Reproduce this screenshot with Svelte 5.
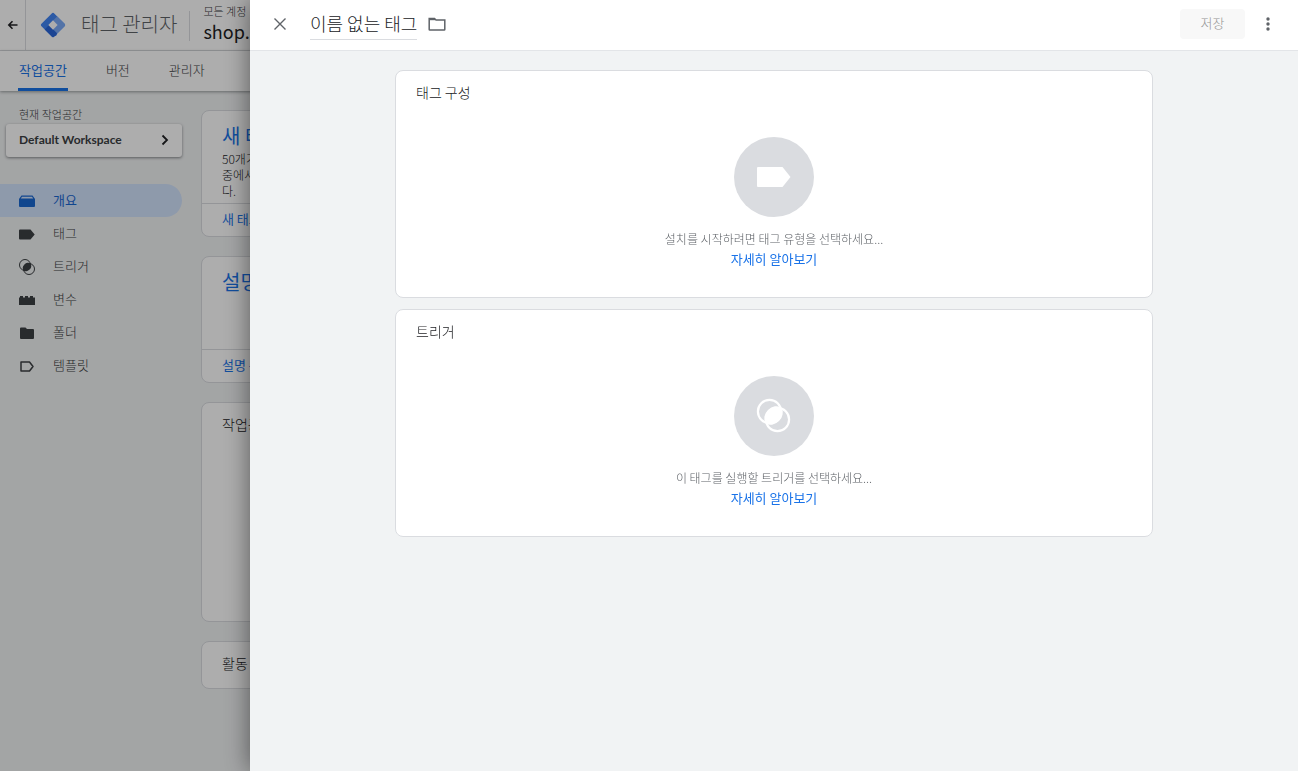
<script>
  let tagName = '이름 없는 태그';
  let activeTab = '작업공간';
  let activeItem = 'overview';

  const tabs = ['작업공간', '버전', '관리자'];

  const navItems = [
    { id: 'overview', label: '개요' },
    { id: 'tags', label: '태그' },
    { id: 'triggers', label: '트리거' },
    { id: 'variables', label: '변수' },
    { id: 'folders', label: '폴더' },
    { id: 'templates', label: '템플릿' }
  ];

  const sections = [
    { id: 'tag', title: '태그 구성', hint: '설치를 시작하려면 태그 유형을 선택하세요...' },
    { id: 'trigger', title: '트리거', hint: '이 태그를 실행할 트리거를 선택하세요...' }
  ];
</script>

<div class="page">
  <header class="topbar">
    <button class="back" aria-label="뒤로">
      <svg width="12" height="12" viewBox="0 0 12 12" fill="none" stroke="#202124" stroke-width="1.6">
        <path d="M10.500 6H2M5.500 2.300 1.800 6l3.700 3.700" />
      </svg>
    </button>
    <svg class="logo" width="26" height="26" viewBox="0 0 26 26">
      <path d="M11.500 1.700a2 2 0 0 1 3 0L24.300 11.500a2 2 0 0 1 0 3L14.500 24.300a2 2 0 0 1-3 0L1.700 14.500a2 2 0 0 1 0-3z" fill="#4285f4" />
      <path d="M17.200 4.400 24.300 11.500a2 2 0 0 1 0 3L17 21.800 13 17.500 17.500 13 13 8.500z" fill="#7baaf7" />
      <path d="M4.700 17.500 8.800 13.300 16.800 21a2.700 2.700 0 0 1-2.300 3.300 2 2 0 0 1-3 0z" fill="#2a66d9" />
      <path d="M13 8.300 17.700 13 13 17.700 8.300 13z" fill="#fff" />
    </svg>
    <span class="product">태그 관리자</span>
    <div class="account">
      <span class="account-path">모든 계정</span>
      <span class="account-name">shop.</span>
    </div>
  </header>

  <nav class="tabs">
    {#each tabs as tab}
      <button class="tab" class:active={activeTab === tab} on:click={() => (activeTab = tab)}>{tab}</button>
    {/each}
  </nav>

  <div class="body">
    <aside>
      <p class="caption">현재 작업공간</p>
      <button class="workspace">
        Default Workspace
        <svg width="8" height="12" viewBox="0 0 8 12" fill="none" stroke="#202124" stroke-width="1.8">
          <path d="M1.500 1.500 6 6l-4.500 4.500" />
        </svg>
      </button>
      <ul>
        {#each navItems as item}
          <li>
            <button class="nav-item" class:active={activeItem === item.id} on:click={() => (activeItem = item.id)}>
              <svg width="16" height="16" viewBox="0 0 16 16" fill="currentColor">
                {#if item.id === 'overview'}
                  <path d="M2.500 2.500h11L16 6v7a1 1 0 0 1-1 1H1a1 1 0 0 1-1-1V6zM3 3.700 1.800 5.500h12.400L13 3.700z" fill-rule="evenodd" />
                {:else if item.id === 'tags'}
                  <path d="M1 3.500h10.500L15.700 8.500l-4.200 5H1a1 1 0 0 1-1-1v-8a1 1 0 0 1 1-1z" />
                {:else if item.id === 'triggers'}
                  <circle cx="6" cy="6" r="5.500" fill="none" stroke="currentColor" />
                  <circle cx="10" cy="10" r="5.500" fill="none" stroke="currentColor" />
                  <ellipse cx="8" cy="8" rx="4.800" ry="3.700" transform="rotate(-45 8 8)" />
                {:else if item.id === 'variables'}
                  <path d="M0 5.500h1V4h3v1.500h2V4h3v1.500h2V4h3v1.500h2V13H0z" />
                {:else if item.id === 'folders'}
                  <path d="M2 2.500h4.500L8 4h6a1 1 0 0 1 1 1v8a1 1 0 0 1-1 1H2a1 1 0 0 1-1-1V3.500a1 1 0 0 1 1-1z" />
                {:else}
                  <path d="M2 4h8.500L14 8.500 10.500 13H2z" fill="none" stroke="currentColor" stroke-width="1.500" stroke-linejoin="round" />
                {/if}
              </svg>
              <span>{item.label}</span>
            </button>
          </li>
        {/each}
      </ul>
    </aside>

    <main>
      <section class="card promo">
        <div class="promo-text">
          <h2>새 태그</h2>
          <p>50개가 넘는 태그 유형<br />중에서 선택하세요<br />다.</p>
        </div>
        <a href="#new-tag">새 태그 추가</a>
      </section>
      <section class="card promo">
        <div class="promo-text">
          <h2>설명</h2>
        </div>
        <a href="#description">설명 수정</a>
      </section>
      <section class="card changes">
        <h3>작업공간 변경사항</h3>
      </section>
      <section class="card">
        <h3>활동 내역</h3>
      </section>
    </main>
  </div>
</div>

<div class="scrim"></div>

<div class="drawer" role="dialog" aria-label="태그">
  <header class="drawer-head">
    <button class="icon-btn" aria-label="닫기">
      <svg width="14" height="14" viewBox="0 0 14 14" stroke="#5f6368" stroke-width="1.400">
        <path d="M1.500 1.500l11 11M12.500 1.500l-11 11" />
      </svg>
    </button>
    <input class="name" type="text" aria-label="태그 이름" bind:value={tagName} />
    <button class="icon-btn folder" aria-label="폴더">
      <svg width="18" height="16" viewBox="0 0 18 16" fill="none" stroke="#5f6368" stroke-width="1.500">
        <path d="M1.200 13.500V2.500h5.300L8 4h8.800v9.500a.6.6 0 0 1-.6.600H1.800a.6.6 0 0 1-.6-.6z" />
        <path d="M1.500 3.200h5.500" stroke-width="2" />
      </svg>
    </button>
    <button class="save" disabled>저장</button>
    <button class="icon-btn" aria-label="더보기">
      <svg width="4" height="14" viewBox="0 0 4 14" fill="#5f6368">
        <circle cx="2" cy="2" r="1.700" />
        <circle cx="2" cy="7" r="1.700" />
        <circle cx="2" cy="12" r="1.700" />
      </svg>
    </button>
  </header>

  <div class="drawer-body">
    {#each sections as section}
      <section class="card config">
        <h3>{section.title}</h3>
        <div class="empty">
          <svg width="80" height="80" viewBox="0 0 80 80">
            <circle cx="40" cy="40" r="40" fill="#dadce0" />
            {#if section.id === 'tag'}
              <path d="M24 30h24.500l8 10-8 10H24a1 1 0 0 1-1-1V31a1 1 0 0 1 1-1z" fill="#fff" />
            {:else}
              <circle cx="35.500" cy="35.500" r="11.600" fill="none" stroke="#fff" stroke-width="2.200" />
              <circle cx="43.500" cy="43.500" r="11.600" fill="none" stroke="#fff" stroke-width="2.200" />
              <ellipse cx="39.500" cy="39.500" rx="10.500" ry="7.800" transform="rotate(-45 39.500 39.500)" fill="#fff" />
            {/if}
          </svg>
          <p>{section.hint}</p>
          <a href="#learn-more">자세히 알아보기</a>
        </div>
      </section>
    {/each}
  </div>
</div>

<style>
  :global(body) {
    background: #fff;
    overflow: hidden;
  }

  :global(#app) {
    font-family: 'Noto Sans CJK KR', 'Noto Sans', sans-serif;
    font-size: 13px;
    font-weight: 300;
    line-height: 20px;
    color: #3c4043;
  }

  button {
    padding: 0;
    border: none;
    background: none;
    font: inherit;
    color: inherit;
    cursor: pointer;
  }

  a {
    font-weight: 400;
    color: #1a73e8;
    text-decoration: none;
  }

  h2, h3, p, ul {
    margin: 0;
    padding: 0;
    font-weight: inherit;
  }

  ul {
    list-style: none;
  }

  svg {
    display: block;
    flex: none;
  }

  .page {
    min-height: 100vh;
    background: #f1f3f4;
  }

  .topbar {
    display: flex;
    align-items: center;
    height: 50px;
    background: #fff;
    border-bottom: 1px solid #dadce0;
    white-space: nowrap;
  }

  .back {
    display: flex;
    align-items: center;
    justify-content: center;
    width: 26px;
    height: 50px;
    border-right: 1px solid #dadce0;
  }

  .logo {
    margin: 0 15px 0 14px;
  }

  .product {
    padding-bottom: 2px;
    font-size: 20px;
    color: #5f6368;
  }

  .account {
    display: flex;
    flex-direction: column;
    margin-left: 12px;
    padding: 0 0 4px 14px;
    position: relative;
  }

  .account::before {
    content: '';
    position: absolute;
    left: 0;
    top: 8px;
    bottom: 6px;
    border-left: 1px solid #dadce0;
  }

  .account-path {
    font-size: 11px;
    line-height: 16px;
    color: #3c4043;
  }

  .account-name {
    font-size: 18px;
    font-weight: 400;
    line-height: 24px;
    color: #202124;
  }

  .tabs {
    display: flex;
    height: 40px;
    padding-left: 18px;
    gap: 36px;
    background: #fff;
    box-shadow: 0 1px 3px rgba(60, 64, 67, 0.5);
    position: relative;
  }

  .tab {
    min-width: 28px;
    padding: 0 1px;
    border-bottom: 3px solid transparent;
    color: #3c4043;
  }

  .tab.active {
    font-weight: 400;
    color: #1a73e8;
    border-color: #1a73e8;
  }

  .body {
    display: flex;
    align-items: flex-start;
  }

  aside {
    width: 182px;
    flex: none;
    padding-top: 13px;
  }

  .caption {
    padding-left: 19px;
    font-size: 11px;
    color: #3c4043;
  }

  .workspace {
    display: flex;
    align-items: center;
    justify-content: space-between;
    width: 176px;
    height: 33px;
    margin-left: 6px;
    padding: 0 13px 1px;
    border-radius: 3px;
    background: #fff;
    box-shadow: 0 1px 3px rgba(60, 64, 67, 0.6);
    font-family: Lato, sans-serif;
    font-size: 12px;
    font-weight: 700;
    color: #3c4043;
  }

  aside ul {
    margin-top: 27px;
  }

  .nav-item {
    display: flex;
    align-items: center;
    gap: 18px;
    width: 100%;
    height: 33px;
    padding-left: 19px;
    border-radius: 0 17px 17px 0;
    color: #3c4043;
  }

  .nav-item span {
    padding-bottom: 2px;
  }

  .nav-item.active {
    background: #d2e3fc;
    font-weight: 400;
    color: #1967d2;
  }

  main {
    flex: 1;
    display: flex;
    flex-direction: column;
    gap: 19px;
    padding: 19px 20px 20px 19px;
  }

  .card {
    background: #fff;
    border: 1px solid #dadce0;
    border-radius: 8px;
  }

  main .card {
    padding: 11px 20px 15px;
  }

  .card h3 {
    font-size: 14px;
    color: #202124;
  }

  main .promo {
    padding: 0;
  }

  .promo-text {
    height: 82px;
    padding: 10px 20px 0;
    border-bottom: 1px solid #dadce0;
    font-size: 12px;
    line-height: 16px;
    color: #202124;
  }

  .promo-text h2 {
    font-size: 20px;
    font-weight: 400;
    line-height: 30px;
    color: #1a73e8;
  }

  .promo a {
    display: block;
    padding: 5px 20px 7px;
  }

  main .changes {
    min-height: 192px;
  }

  .scrim {
    position: fixed;
    inset: 0;
    background: rgba(0, 0, 0, 0.32);
  }

  .drawer {
    position: fixed;
    inset: 0 0 0 250px;
    display: flex;
    flex-direction: column;
    border-right: 2px solid #fff;
    background: #f1f3f4;
    box-shadow: 0 0 24px rgba(0, 0, 0, 0.5);
  }

  .drawer-head {
    display: flex;
    align-items: center;
    height: 48px;
    padding: 0 15px 2px;
    background: #fff;
    border-bottom: 1px solid #e3e5e8;
  }

  .icon-btn {
    display: flex;
    align-items: center;
    justify-content: center;
    width: 30px;
    height: 30px;
  }

  .name {
    width: 107px;
    height: 28px;
    margin-left: 15px;
    padding: 0 0 2px;
    border: none;
    border-bottom: 1px solid #dadce0;
    outline: none;
    background: none;
    font: inherit;
    font-size: 18px;
    color: #202124;
  }

  .folder {
    margin: 0 auto 0 5px;
  }

  .save {
    width: 65px;
    height: 30px;
    padding-bottom: 2px;
    margin-right: 8px;
    border-radius: 4px;
    background: #f8f8f8;
    color: #949494;
    cursor: default;
  }

  .drawer-body {
    display: flex;
    flex-direction: column;
    gap: 11px;
    flex: 1;
    padding: 19px 145px;
    overflow: auto;
  }

  .config {
    padding: 11px 20px 28px;
  }

  .empty {
    display: flex;
    flex-direction: column;
    align-items: center;
    margin-top: 35px;
  }

  .empty p {
    margin-top: 12px;
    font-size: 12px;
    color: #5f6368;
  }
</style>
